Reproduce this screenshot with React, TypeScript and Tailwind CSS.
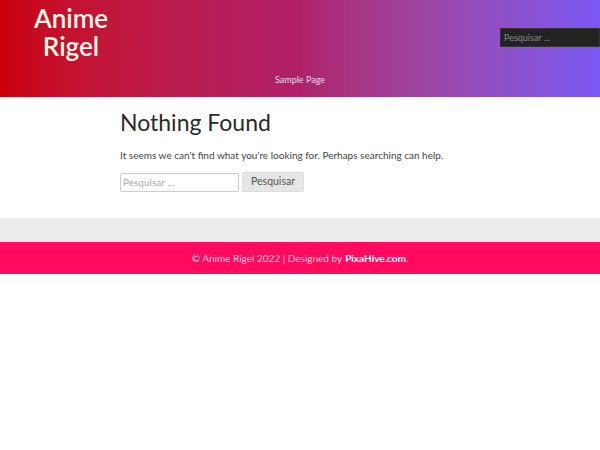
export default function App() {
  return (
    <div className="min-h-screen bg-white font-['Lato','Open_Sans',sans-serif]">
      {/* Header */}
      <header className="h-[97px] bg-gradient-to-r from-[#cc0008] via-[#b0206a] to-[#7b58f6] relative">
        <div className="absolute left-[26px] top-[4px] w-[90px] text-center text-[26px] leading-[28px] font-semibold text-[#fff8e6]">
          Anime Rigel
        </div>
        <div className="absolute right-0 top-[23px]">
          <input
            placeholder="Pesquisar ..."
            className="w-[100px] h-[19px] bg-[#222] border border-[#333] px-[3px] text-[9px] text-[#999] placeholder:text-[#888] outline-none"
          />
        </div>
        <nav className="absolute left-0 right-0 top-[73px] text-center text-[9px] text-[#f3d8ec]">
          Sample Page
        </nav>
      </header>

      {/* Content */}
      <main className="w-[360px] mx-auto pt-[10px] pb-[26px]">
        <h1 className="text-[23px] leading-[30px] text-[#2a2a2a]">Nothing Found</h1>
        <p className="mt-[11px] text-[10px] leading-[15px] text-[#444]">
          It seems we can't find what you're looking for. Perhaps searching can help.
        </p>
        <div className="mt-[9px] flex items-center gap-[3px]">
          <input
            placeholder="Pesquisar ..."
            className="w-[119px] h-[19px] border border-[#ccc] rounded-[2px] px-[2px] text-[10px] placeholder:text-[#aaa] outline-none"
          />
          <button className="w-[62px] h-[20px] bg-[#e6e6e6] border border-[#ddd] rounded-[2px] text-[10.5px] text-[#555]">
            Pesquisar
          </button>
        </div>
      </main>

      <div className="h-[24px] bg-[#ececec]" />

      {/* Footer */}
      <footer className="h-[32px] bg-[#ff0a5f] flex items-center justify-center text-[10px] text-[#ffd0de]">
        © Anime Rigel 2022 | Designed by <span className="font-bold text-white ml-[3px]">PixaHive.com</span>.
      </footer>
    </div>
  );
}
